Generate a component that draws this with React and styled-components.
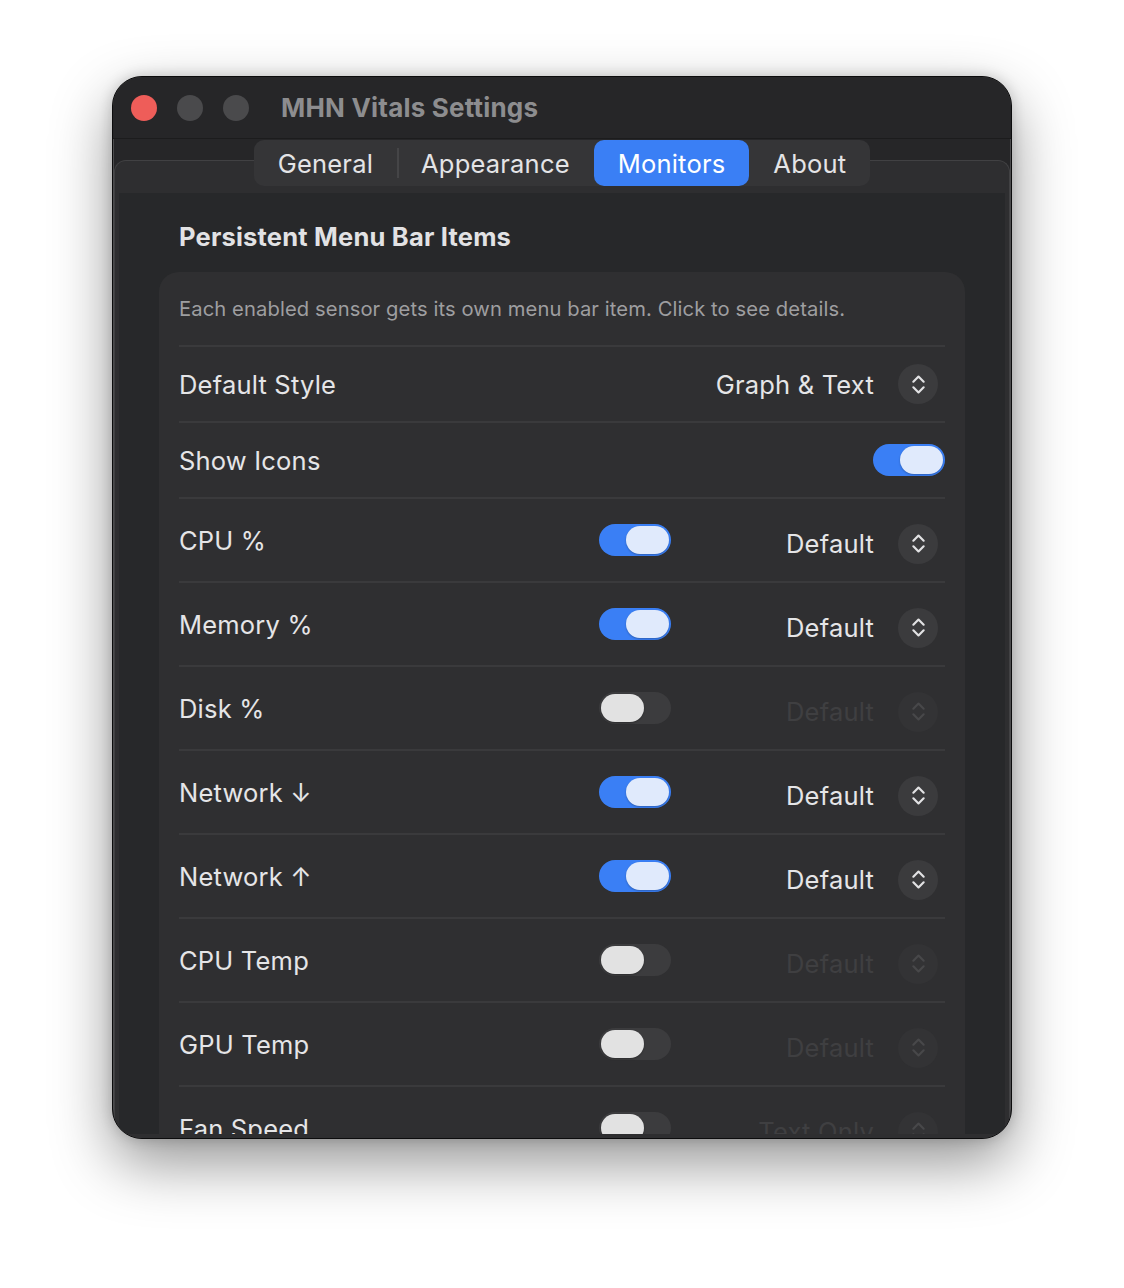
import styled, { createGlobalStyle } from "styled-components"

const GlobalStyle = createGlobalStyle`
    * {
        box-sizing: border-box;
    }

    body {
        margin: 0;
        background-color: #ffffff;
        font-family: Inter, "Noto Sans", "Liberation Sans", sans-serif;
        -webkit-font-smoothing: antialiased;
    }
`

const tabs = ["General", "Appearance", "Monitors", "About"]

const sensors = [
    { label: "CPU %", on: true, style: "Default" },
    { label: "Memory %", on: true, style: "Default" },
    { label: "Disk %", on: false, style: "Default" },
    { label: "Network ↓", on: true, style: "Default" },
    { label: "Network ↑", on: true, style: "Default" },
    { label: "CPU Temp", on: false, style: "Default" },
    { label: "GPU Temp", on: false, style: "Default" },
    { label: "Fan Speed", on: false, style: "Text Only" },
]

function UpDownIcon () {
    return (
        <svg width="15" height="21" viewBox="0 0 16 22" fill="none" stroke="currentColor" strokeWidth="2.3" strokeLinecap="round" strokeLinejoin="round">
            <path d="M2.5 8 L8 2.5 L13.5 8" />
            <path d="M2.5 14 L8 19.5 L13.5 14" />
        </svg>
    )
}

function Picker ({ value, disabled, offset }) {
    return (
        <PickerBox disabled={disabled} offset={offset}>
            <span>{value}</span>
            <Stepper disabled={disabled}>
                <UpDownIcon />
            </Stepper>
        </PickerBox>
    )
}

export default function App () {
    return (
        <>
            <GlobalStyle />
            <Stage>
                <Window>
                    <TitleBar>
                        <Lights>
                            <Light color="#ee5d59" />
                            <Light color="#4a4a4c" />
                            <Light color="#4a4a4c" />
                        </Lights>
                        <Title>MHN Vitals Settings</Title>
                    </TitleBar>

                    <TabArea>
                        <Segmented>
                            {tabs.map((tab, i) => (
                                <Segment key={tab} selected={tab === "Monitors"} divider={i === 1}>
                                    {tab}
                                </Segment>
                            ))}
                        </Segmented>

                        <GroupBox>
                            <Pane>
                                <Heading>Persistent Menu Bar Items</Heading>
                                <Card>
                                    <Description>Each enabled sensor gets its own menu bar item. Click to see details.</Description>

                                    <Row height={76}>
                                        <Label>Default Style</Label>
                                        <Picker value="Graph & Text" />
                                    </Row>

                                    <Row height={76}>
                                        <Label>Show Icons</Label>
                                        <Toggle on />
                                    </Row>

                                    {sensors.map(sensor => (
                                        <SensorRow key={sensor.label}>
                                            <Label>{sensor.label}</Label>
                                            <Toggle on={sensor.on} />
                                            <Picker value={sensor.style} disabled={!sensor.on} offset />
                                        </SensorRow>
                                    ))}
                                </Card>
                            </Pane>
                        </GroupBox>
                    </TabArea>
                </Window>
            </Stage>
        </>
    )
}

//Styled Components//
const Stage = styled.div`
    padding: 76px 112px 150px;
`

const Window = styled.div`
    width: 900px;
    height: 1063px;
    display: flex;
    flex-direction: column;
    background-color: #262628;
    border: 1px solid #0c0c0d;
    border-radius: 30px;
    overflow: hidden;
    box-shadow: inset 0 0 0 1px #4c4c4e, 0 24px 60px rgba(0, 0, 0, 0.42), 0 0 14px rgba(0, 0, 0, 0.18);
`

const TitleBar = styled.div`
    height: 62px;
    flex-shrink: 0;
    display: flex;
    align-items: center;
    padding-left: 18px;
    background-color: #262628;
    border-bottom: 1px solid #1c1c1d;
`

const Lights = styled.div`
    display: flex;
    gap: 20px;
`

const Light = styled.span`
    width: 26px;
    height: 26px;
    border-radius: 50%;
    background-color: ${props => props.color};
`

const Title = styled.h1`
    margin: 0 0 0 32px;
    font-size: 26px;
    font-weight: 700;
    color: #8d8d8f;
    letter-spacing: 0.2px;
`

const TabArea = styled.div`
    flex: 1;
    min-height: 0;
    display: flex;
    flex-direction: column;
    align-items: center;
    padding: 1px 1px 0;
`

const Segmented = styled.div`
    position: relative;
    z-index: 1;
    height: 46px;
    display: flex;
    align-items: stretch;
    background-color: #353537;
    border-radius: 10px;
`

const Segment = styled.div`
    position: relative;
    display: flex;
    align-items: center;
    padding: 0 24px;
    border-radius: 10px;
    font-size: 25.5px;
    letter-spacing: 0.2px;
    color: ${props => props.selected ? "#ffffff" : "#e4e4e6"};
    background-color: ${props => props.selected ? "#3a7ff5" : "transparent"};

    ${props => props.divider && `
        &::before {
            content: "";
            position: absolute;
            left: 0;
            top: 8px;
            bottom: 8px;
            width: 2px;
            background-color: #454547;
        }
    `}
`

const GroupBox = styled.div`
    align-self: stretch;
    flex: 1;
    min-height: 0;
    display: flex;
    flex-direction: column;
    margin-top: -26px;
    padding: 32px 4px 4px;
    background-color: #2e2e30;
    border: 1px solid #414143;
    border-bottom: none;
    border-radius: 12px 12px 0 0;
`

const Pane = styled.div`
    flex: 1;
    min-height: 0;
    overflow: hidden;
    padding: 29px 40px 0;
    background-color: #27282a;
`

const Heading = styled.h2`
    margin: 0 0 20px 20px;
    font-size: 25.5px;
    line-height: 30px;
    font-weight: 700;
    letter-spacing: 0.2px;
    color: #e2e2e4;
`

const Card = styled.div`
    padding: 0 20px 20px;
    background-color: #2f2f31;
    border-radius: 20px;
`

const Description = styled.p`
    height: 73px;
    margin: 0;
    display: flex;
    align-items: center;
    font-size: 20.2px;
    letter-spacing: 0.1px;
    color: #9e9ea0;
`

const Row = styled.div`
    height: ${props => props.height}px;
    display: flex;
    align-items: center;
    justify-content: space-between;
    border-top: 2px solid #3a3a3c;
`

const SensorRow = styled.div`
    height: 84px;
    display: grid;
    grid-template-columns: 420px 72px 1fr;
    align-items: center;
    border-top: 2px solid #3a3a3c;
`

const Label = styled.span`
    font-size: 25.5px;
    letter-spacing: 0.2px;
    color: #e5e5e7;
`

const Toggle = styled.span`
    width: 72px;
    height: 32px;
    display: flex;
    align-items: center;
    justify-content: ${props => props.on ? "flex-end" : "flex-start"};
    padding: 0 2px;
    border-radius: 16px;
    background-color: ${props => props.on ? "#3a7ff5" : "#3c3c3e"};

    &::after {
        content: "";
        width: 43px;
        height: 28px;
        border-radius: 14px;
        background-color: ${props => props.on ? "#e0eafc" : "#e2e2e2"};
        box-shadow: 0 1px 2px rgba(0, 0, 0, 0.25);
    }
`

const PickerBox = styled.div`
    justify-self: end;
    display: flex;
    align-items: center;
    gap: 24px;
    margin-right: 7px;
    margin-top: ${props => props.offset ? "7px" : "0"};
    font-size: 25.5px;
    letter-spacing: 0.2px;
    color: ${props => props.disabled ? "#3f3f41" : "#e5e5e7"};
`

const Stepper = styled.span`
    width: 40px;
    height: 40px;
    display: flex;
    align-items: center;
    justify-content: center;
    border-radius: 50%;
    background-color: ${props => props.disabled ? "#333335" : "#3b3b3d"};
    color: ${props => props.disabled ? "#48484a" : "#e2e2e4"};
`
